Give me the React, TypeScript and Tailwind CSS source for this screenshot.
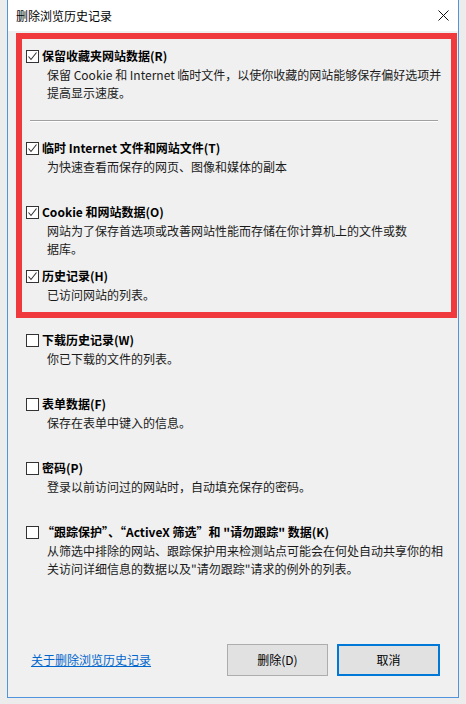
import React from 'react';

const CheckBox: React.FC<{ checked?: boolean }> = ({ checked }) => (
  <svg width="13" height="13" viewBox="0 0 13 13" className="shrink-0">
    <rect x="0.5" y="0.5" width="12" height="12" fill="#ffffff" stroke="#333333" />
    {checked && <polyline points="2.5,6.5 5,9.5 10.5,2.5" fill="none" stroke="#333333" strokeWidth="1.1" />}
  </svg>
);

type Item = { title: string; lines: string[]; checked?: boolean; h: string };

const Option: React.FC<{ item: Item }> = ({ item }) => (
  <div className={`${item.h} flex flex-col`}>
    <div className="h-[20px] flex items-center gap-[3px]">
      <CheckBox checked={item.checked} />
      <span className="font-bold text-black text-[12px]">{item.title}</span>
    </div>
    <div className="pl-[21px] text-[12px] leading-[18px] text-[#1a1a1a]">
      {item.lines.map((l) => (
        <div key={l} className="whitespace-nowrap">{l}</div>
      ))}
    </div>
  </div>
);

const boxed: Item[] = [
  { title: '临时 Internet 文件和网站文件(T)', lines: ['为快速查看而保存的网页、图像和媒体的副本'], checked: true, h: 'h-[64px]' },
  { title: 'Cookie 和网站数据(O)', lines: ['网站为了保存首选项或改善网站性能而存储在你计算机上的文件或数', '据库。'], checked: true, h: 'h-[64px]' },
  { title: '历史记录(H)', lines: ['已访问网站的列表。'], checked: true, h: 'h-[46px]' },
];

const rest: Item[] = [
  { title: '下载历史记录(W)', lines: ['你已下载的文件的列表。'], h: 'h-[64px]' },
  { title: '表单数据(F)', lines: ['保存在表单中键入的信息。'], h: 'h-[64px]' },
  { title: '密码(P)', lines: ['登录以前访问过的网站时，自动填充保存的密码。'], h: 'h-[64px]' },
  {
    title: '“跟踪保护”、“ActiveX 筛选”和 "请勿跟踪" 数据(K)',
    lines: ['从筛选中排除的网站、跟踪保护用来检测站点可能会在何处自动共享你的相', '关访问详细信息的数据以及"请勿跟踪"请求的例外的列表。'],
    h: 'h-[64px]',
  },
];

const App: React.FC = () => {
  return (
    <div
      className="w-[466px] h-[704px] bg-[#ececec] pl-[7px] overflow-hidden"
      style={{ fontFamily: '"Noto Sans CJK SC", "Noto Sans", sans-serif' }}
    >
      <div className="w-[452px] h-[698px] flex flex-col border-l border-r border-b border-[#4f94dc] bg-[#f0f0f0]">
        {/* Title bar */}
        <div className="h-[31px] bg-white flex items-center justify-between pl-[8px] pr-[9px]">
          <span className="text-[12px] text-black">删除浏览历史记录</span>
          <svg width="11" height="11" viewBox="0 0 11 11">
            <path d="M0.5 0.5 L10.5 10.5 M10.5 0.5 L0.5 10.5" stroke="#111111" strokeWidth="1" />
          </svg>
        </div>

        {/* Highlighted group */}
        <div className="mt-[2px] ml-[8px] mr-[1px] border-[6px] border-[#f0393d] pt-[7px] pl-[4px]">
          <Option item={{ title: '保留收藏夹网站数据(R)', lines: ['保留 Cookie 和 Internet 临时文件，以使你收藏的网站能够保存偏好选项并', '提高显示速度。'], checked: true, h: 'h-[64px]' }} />
          <div className="mt-[10px] mb-[16px] ml-[4px] w-[408px] border-t border-[#a0a0a0] border-b border-b-white" />
          {boxed.map((it) => (
            <Option key={it.title} item={it} />
          ))}
        </div>

        {/* Remaining options */}
        <div className="mt-[12px] pl-[18px]">
          {rest.map((it) => (
            <Option key={it.title} item={it} />
          ))}
        </div>

        <div className="flex-1" />

        {/* Footer */}
        <div className="flex items-center justify-between pl-[23px] pr-[18px] pb-[21px]">
          <a className="text-[12px] text-[#0066cc] underline cursor-pointer">关于删除浏览历史记录</a>
          <div className="flex gap-[9px]">
            <button className="w-[101px] h-[32px] bg-[#e1e1e1] border border-[#adadad] text-[12px] text-black">删除(D)</button>
            <button className="w-[103px] h-[32px] bg-[#e1e1e1] border-2 border-[#0078d7] text-[12px] text-black">取消</button>
          </div>
        </div>
      </div>
    </div>
  );
};

export default App;
